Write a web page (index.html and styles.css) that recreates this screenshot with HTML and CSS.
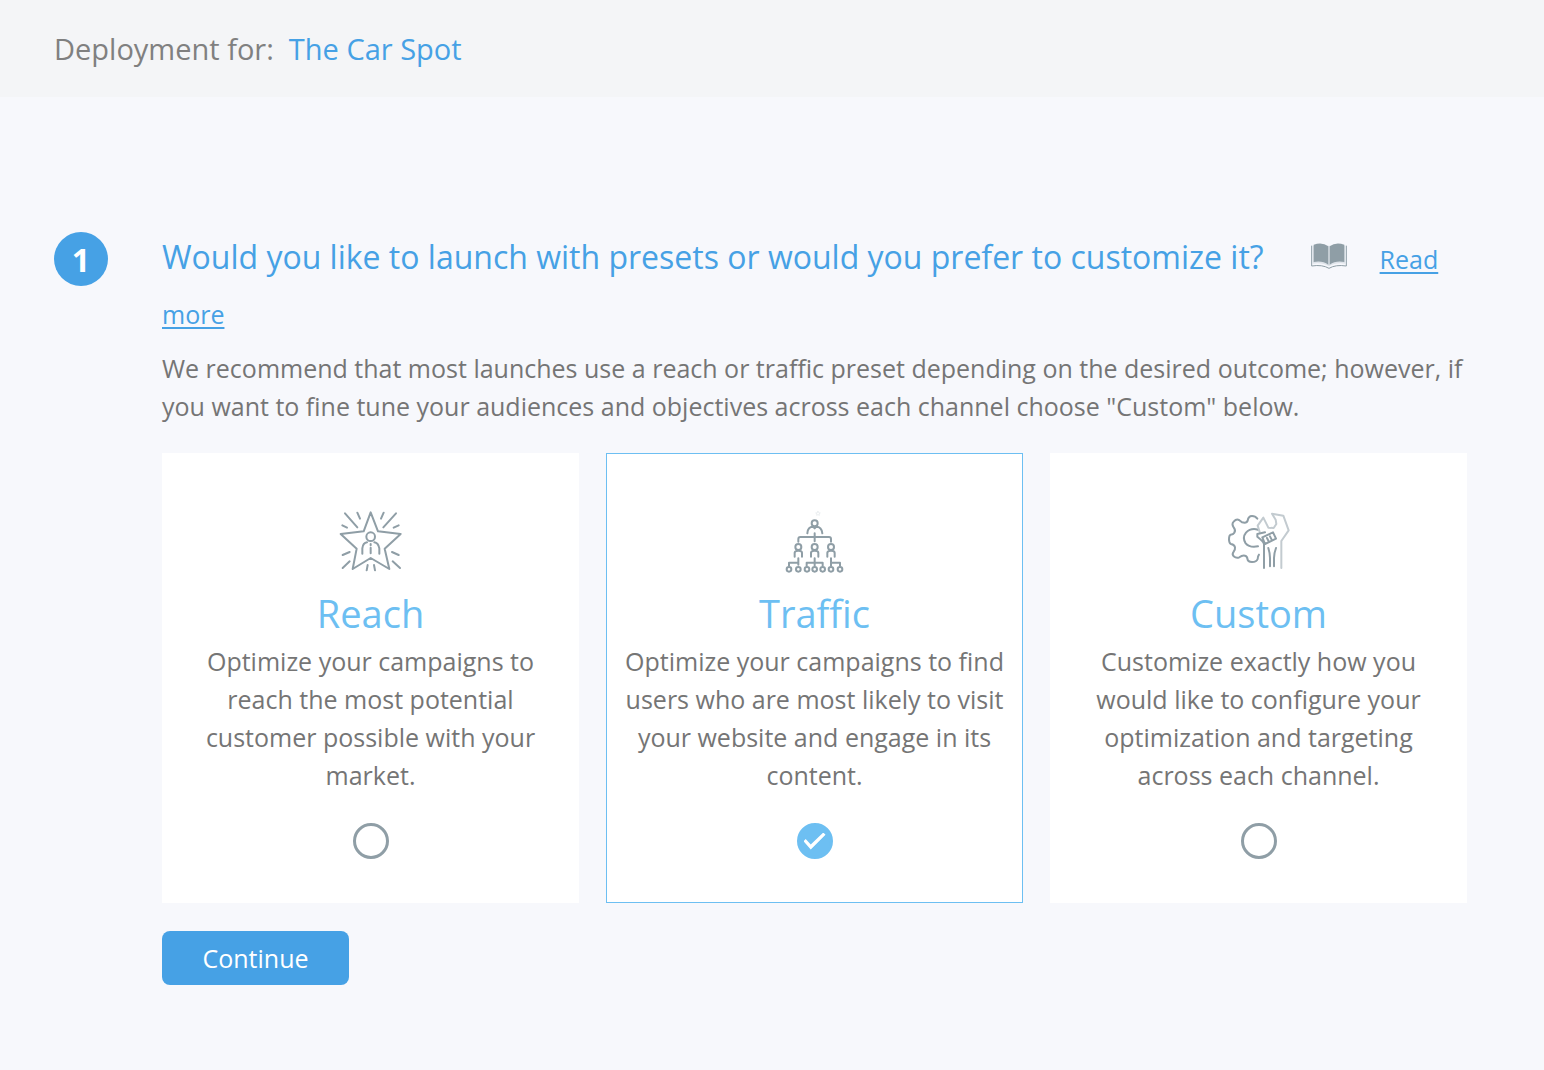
FILE: index.html
```html
<!DOCTYPE html>
<html lang="en">
<head>
<meta charset="utf-8">
<meta name="viewport" content="width=device-width, initial-scale=1">
<title>Deployment for: The Car Spot</title>
<link rel="stylesheet" href="styles.css">
</head>
<body>
<header class="topbar">
  <span>Deployment for:</span>
  <a class="account" href="#">The Car Spot</a>
</header>
<main class="step">
  <div class="step-number">1</div>
  <form class="step-body">
    <div class="heading">
      <h1 class="question" id="question">Would you like to launch with presets or would you prefer to customize it?</h1>
      <svg class="book" viewBox="0 0 108 78" aria-hidden="true">
        <path d="M2 8v61q32-5 52 7q20-12 52-7V8" fill="none" stroke="#8f9ea6" stroke-width="3"/>
        <path d="M4 8v54q30-5 50 8q20-13 50-8V8" fill="#dfe4ea"/>
        <path d="M8 5q26-9 44 5v55q-18-13-44-8zM56 10q18-14 44-5v52q-26-5-44 8z" fill="#8f9ea6"/>
      </svg>
      <a class="read-more" href="#">Read more</a>
    </div>
    <p class="intro">We recommend that most launches use a reach or traffic preset depending on the desired outcome; however, if you want to fine tune your audiences and objectives across each channel choose "Custom" below.</p>
    <div class="cards" role="radiogroup" aria-labelledby="question">
      <label class="card">
        <svg class="icon" viewBox="2 0 240 240" aria-hidden="true">
          <path d="M121 37L143 94L211 102L163 146L177 207L121 174L67 207L79 146L31 102L100 94ZM44 40L81 82M81 38L89 56M36 76L50 83M197 40L159 82M160 38L152 56M205 76L190 83M37 165L58 156M37 204L58 184M205 165L185 156M209 204L187 184M112 195L109 211M131 195L134 211M121 132V136M121 143V160"/>
          <circle cx="121" cy="110" r="13"/>
          <path d="M96 161V145Q98 129 110 127M132 127Q144 129 147 145V161"/>
        </svg>
        <span class="card-title">Reach</span>
        <span class="card-text">Optimize your campaigns to reach the most potential customer possible with your market.</span>
        <input class="choice" type="radio" name="preset" value="reach">
      </label>
      <label class="card">
        <svg class="icon" viewBox="0 0 240 240" aria-hidden="true">
          <circle cx="119" cy="70" r="9"/>
          <path d="M97 100Q98 80 114 80L119 85L124 80Q140 80 142 100M119 100V124M70 125V117Q70 111 76 111H162Q168 111 168 117V125"/>
          <g id="person">
            <circle cx="119" cy="141" r="9"/>
            <path d="M108 170V158Q109 152 119 152Q130 152 130 158V170"/>
          </g>
          <use href="#person" x="-49"/>
          <use href="#person" x="49"/>
          <path d="M70 175V194M42 197V188H70M119 175V197M95 197V188H143V197M168 175V197M168 188H195V197"/>
          <circle cx="42" cy="208" r="7"/><circle cx="70" cy="208" r="7"/><circle cx="96" cy="208" r="7"/><circle cx="119" cy="208" r="7"/><circle cx="143" cy="208" r="7"/><circle cx="168" cy="208" r="7"/><circle cx="195" cy="208" r="7"/>
          <path class="faint" d="M129 34L131 38L136 39L132 42L133 46L129 44L125 46L126 42L122 39L127 38Z"/>
        </svg>
        <span class="card-title">Traffic</span>
        <span class="card-text">Optimize your campaigns to find users who are most likely to visit your website and engage in its content.</span>
        <input class="choice" type="radio" name="preset" value="traffic" checked>
      </label>
      <label class="card">
        <svg class="icon" viewBox="2 0 240 240" aria-hidden="true">
          <path d="M117 56Q111 48 101 48Q90 48 88 62Q86 68 79 68L71 67L62 60Q54 56 46 65Q39 72 46 82Q53 91 48 98Q45 103 37 104Q32 106 32 118Q32 130 38 132Q49 134 50 142Q51 148 46 155Q40 163 46 169Q54 176 63 172Q72 165 80 167Q87 169 87 176Q88 186 101 186Q115 186 118 177Q118 169 122 164M119 89Q97 83 83 98Q71 113 82 130Q94 144 119 139"/>
          <path class="light" d="M189 204V123L211 91L195 47L161 41L172 59L174 72L166 84L150 83L147 77L135 53L118 77L124 96"/>
          <path d="M137 204V132Q136 125 117 110V102L140 97M132 112L164 97L173 116L140 132ZM146 114L151 124M155 109L160 119M150 144Q155 160 155 174V199M173 144Q167 160 167 174V199"/>
        </svg>
        <span class="card-title">Custom</span>
        <span class="card-text">Customize exactly how you would like to configure your optimization and targeting across each channel.</span>
        <input class="choice" type="radio" name="preset" value="custom">
      </label>
    </div>
    <button class="continue" type="button">Continue</button>
  </form>
</main>
</body>
</html>
```
FILE: styles.css
```css
* {
  box-sizing: border-box;
}

body {
  margin: 0;
  background: #f7f8fc;
  color: #757575;
  font-family: "Open Sans", sans-serif;
  font-size: 25px;
  line-height: 38px;
}

.topbar {
  display: flex;
  gap: 15px;
  padding: 27px 54px 26px;
  background: #f4f5f7;
  color: #808080;
  font-size: 29px;
  line-height: 44px;
}

.account {
  color: #46a1e5;
  text-decoration: none;
}

.step {
  display: flex;
  gap: 54px;
  padding: 132px 54px 84px;
}

.step-number {
  flex: none;
  width: 54px;
  height: 54px;
  margin-top: 3px;
  border-radius: 50%;
  background: #46a1e5;
  color: #fff;
  font-size: 32px;
  font-weight: 700;
  line-height: 56px;
  text-align: center;
}

.step-body {
  flex: 1;
  min-width: 0;
}

.heading {
  line-height: 55px;
}

.question {
  display: inline;
  color: #46a1e5;
  font-size: 32px;
  font-weight: 400;
}

.book {
  width: 36px;
  height: 26px;
  margin: 0 26px 0 41px;
}

.read-more {
  color: #46a1e5;
  text-decoration-thickness: 2px;
  text-underline-offset: 3px;
}

.intro {
  margin: 7px 0 28px;
}

.cards {
  display: grid;
  grid-template-columns: repeat(3, 1fr);
  gap: 27px;
  margin-right: 23px;
}

.card {
  display: flex;
  flex-direction: column;
  align-items: center;
  padding: 46px 15px 43px;
  border: 1px solid #fff;
  background: #fff;
  text-align: center;
  cursor: pointer;
}

.card:has(:checked) {
  border-color: #6dbff2;
}

.icon {
  width: 80px;
  height: 80px;
  fill: none;
  stroke: #8f9ea6;
  stroke-width: 6;
  stroke-linecap: round;
  stroke-linejoin: round;
}

.icon .light {
  stroke: #c3cbd0;
}

.icon .faint {
  stroke: #e3e7ea;
  stroke-width: 2;
}

.card-title {
  margin-top: 5px;
  color: #6dbff2;
  font-size: 38px;
  line-height: 57px;
}

.card-text {
  margin-bottom: 29px;
}

.choice {
  display: grid;
  place-items: center;
  width: 36px;
  height: 36px;
  margin: auto 0 0;
  border: 3px solid #8f9ea6;
  border-radius: 50%;
  appearance: none;
}

.choice:checked {
  border-color: #6dbff2;
  background: #6dbff2;
}

.choice:checked::before {
  content: "";
  width: 22px;
  height: 17px;
  background: #fff;
  clip-path: polygon(0 52%, 10% 38%, 33% 71%, 90% 0, 100% 13%, 33% 100%);
}

.continue {
  display: block;
  min-width: 187px;
  margin-top: 28px;
  padding: 8px 40px;
  border: 0;
  border-radius: 8px;
  background: #46a1e5;
  color: #fff;
  font: inherit;
}
```
